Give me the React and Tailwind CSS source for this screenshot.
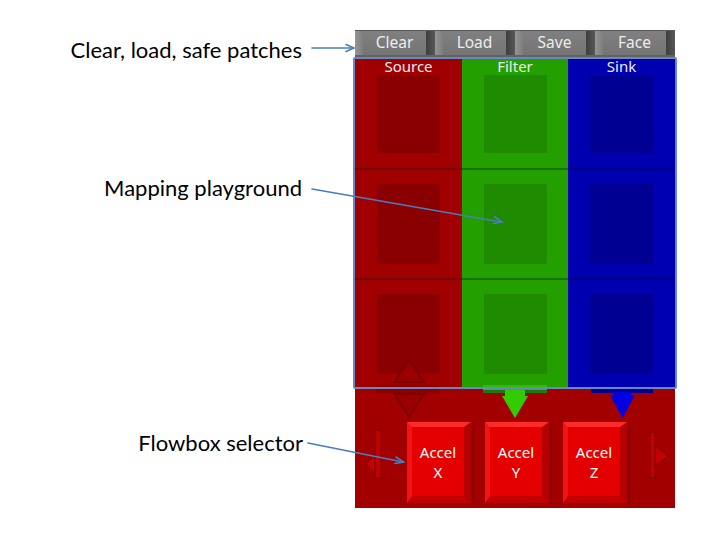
import React from "react";

const uiFont = { fontFamily: '"Noto Sans", "DejaVu Sans", sans-serif' };

function ToolButton({ label }) {
  return (
    <div className="flex flex-1 h-full">
      <div className="w-[8px] bg-gradient-to-r from-[#959595] to-[#7e7e7e]" />
      <div className="flex-1 bg-gradient-to-b from-[#808080] to-[#747474] flex items-center justify-center text-[15.5px] leading-none text-[#ededed]">
        {label}
      </div>
      <div className="w-[9px] bg-gradient-to-r from-[#3e3e3e] to-[#575757]" />
    </div>
  );
}

const columns = [
  { name: "Source", w: "w-[107px]", bg: "bg-[#a00000]", inner: "bg-[#8a0000]", line: "border-[#7a0000]" },
  { name: "Filter", w: "w-[106px]", bg: "bg-[#23a000]", inner: "bg-[#1f8b00]", line: "border-[#177000]" },
  { name: "Sink", w: "w-[107px]", bg: "bg-[#0000b0]", inner: "bg-[#000092]", line: "border-[#000080]" },
];

function Column({ c }) {
  return (
    <div className={`relative flex flex-col ${c.w} ${c.bg}`}>
      <div className="flex h-[111px] items-center justify-center">
        <div className={`w-[63px] h-[78px] mt-[3px] ${c.inner}`} />
      </div>
      <div className={`flex h-[110px] items-center justify-center border-t-2 ${c.line}`}>
        <div className={`w-[63px] h-[80px] ${c.inner}`} />
      </div>
      <div className={`flex h-[110px] items-center justify-center border-t-2 ${c.line}`}>
        <div className={`w-[63px] h-[80px] ${c.inner}`} />
      </div>
      <div className="absolute left-0 right-0 top-0 text-center text-[15px] leading-[18px] text-[#ececec]">
        {c.name}
      </div>
    </div>
  );
}

function AccelButton({ axis }) {
  return (
    <div className="w-[64px] h-[81px] bg-[#e50000] border-t-[5px] border-t-[#ff2a2a] border-l-[5px] border-l-[#f21414] border-r-[7px] border-r-[#b40000] border-b-[7px] border-b-[#c20000] shadow-[3px_1px_0_#8a0000] flex flex-col items-center justify-center text-white text-[15px] leading-[20px]">
      <span>Accel</span>
      <span>{axis}</span>
    </div>
  );
}

export default function App() {
  return (
    <div className="relative w-[720px] h-[540px] bg-white overflow-hidden flex">
      {/* annotation labels */}
      <div
        className="w-[355px] flex flex-col text-[22px] leading-[26px] text-black"
        style={{ fontFamily: 'Lato, "Open Sans", sans-serif' }}
      >
        <div className="mt-[37px] w-[302px] text-right">Clear, load, safe patches</div>
        <div className="mt-[112px] w-[302px] text-right">Mapping playground</div>
        <div className="mt-[229px] w-[303px] text-right">Flowbox selector</div>
      </div>

      {/* phone screen */}
      <div className="w-[320px] pt-[30px] flex flex-col" style={uiFont}>
        <div className="h-[27px] flex bg-[#5e5e5e] border-t border-[#5a5a5a] border-b-2 border-b-[#626262]">
          <ToolButton label="Clear" />
          <ToolButton label="Load" />
          <ToolButton label="Save" />
          <ToolButton label="Face" />
        </div>

        <div className="relative h-[331px] flex">
          {columns.map((c) => (
            <Column key={c.name} c={c} />
          ))}
        </div>

        <div className="relative h-[120px] bg-[#a20000] flex flex-col">
          {/* connector arrows overlaying the boundary */}
          <div className="absolute left-0 right-0 top-[-30px] h-[64px] flex">
            <div className="w-[107px] flex justify-center">
              <svg width="70" height="64" viewBox="0 0 70 64">
                <rect x="2" y="27" width="63" height="8" fill="#8c0000" />
                <polygon points="35,2 50,24 20,24" fill="#9a0000" stroke="#760000" strokeWidth="1.5" />
                <polygon points="20,36 50,36 35,59" fill="#9a0000" stroke="#760000" strokeWidth="1.5" />
              </svg>
            </div>
            <div className="w-[106px] flex justify-center">
              <svg width="70" height="64" viewBox="0 0 70 64">
                <rect x="3" y="27" width="64" height="5" fill="#33bb00" />
                <rect x="3" y="32" width="64" height="3" fill="#1c7a00" />
                <rect x="25" y="32" width="20" height="6" fill="#33cc00" />
                <polygon points="22,38 48,38 35,60" fill="#33cc00" />
              </svg>
            </div>
            <div className="w-[107px] flex justify-center">
              <svg width="70" height="64" viewBox="0 0 70 64">
                <rect x="4" y="30" width="62" height="5" fill="#00008c" />
                <rect x="26" y="34" width="18" height="4" fill="#0000e0" />
                <polygon points="23,37 48,37 35.5,60" fill="#0000e0" />
              </svg>
            </div>
          </div>

          <div className="h-[34px]" />
          <div className="flex items-center pl-[10px]">
            <svg width="20" height="81" viewBox="0 0 20 81">
              <polygon points="1,42 10,32 10,52" fill="#c40000" stroke="#7a0000" strokeWidth="1" />
              <rect x="10" y="8" width="6" height="48" fill="#c20000" stroke="#7a0000" strokeWidth="1" />
            </svg>
            <div className="ml-[22px] flex gap-[14px]">
              <AccelButton axis="X" />
              <AccelButton axis="Y" />
              <AccelButton axis="Z" />
            </div>
            <svg className="ml-[22px]" width="20" height="81" viewBox="0 0 20 81">
              <rect x="1" y="10" width="5" height="46" fill="#c20000" stroke="#7a0000" strokeWidth="1" />
              <polygon points="6,24 19,34 6,44" fill="#c40000" stroke="#7a0000" strokeWidth="1" />
            </svg>
          </div>
        </div>
      </div>

      {/* playground outline */}
      <div className="absolute left-[353px] top-[57px] w-[324px] h-[332px] border-2 border-[#6688c4] rounded-[2px] pointer-events-none" />

      {/* annotation arrows */}
      <svg className="absolute inset-0 pointer-events-none" width="720" height="540" viewBox="0 0 720 540">
        <g stroke="#4a7ebb" strokeWidth="1.6" fill="none" strokeLinecap="round">
          <line x1="312" y1="48" x2="353" y2="48" />
          <polyline points="346,44.5 354,48 346,51.5" />
          <line x1="312" y1="189" x2="501" y2="222" />
          <polyline points="494.5,216.5 502,222 493.3,223.5" />
          <line x1="308" y1="443" x2="403" y2="462" />
          <polyline points="396,457 403.5,462 394.8,463.5" />
        </g>
      </svg>
    </div>
  );
}
